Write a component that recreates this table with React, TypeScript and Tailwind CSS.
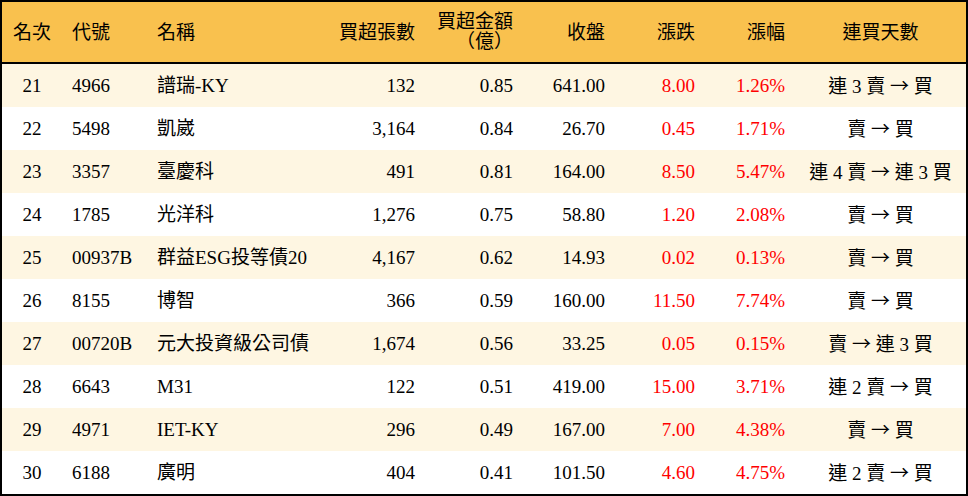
const rows = [
  { rank: 21, code: '4966', name: '譜瑞-KY', vol: '132', amt: '0.85', close: '641.00', chg: '8.00', pct: '1.26%', from: '連 3 賣', to: '買' },
  { rank: 22, code: '5498', name: '凱崴', vol: '3,164', amt: '0.84', close: '26.70', chg: '0.45', pct: '1.71%', from: '賣', to: '買' },
  { rank: 23, code: '3357', name: '臺慶科', vol: '491', amt: '0.81', close: '164.00', chg: '8.50', pct: '5.47%', from: '連 4 賣', to: '連 3 買' },
  { rank: 24, code: '1785', name: '光洋科', vol: '1,276', amt: '0.75', close: '58.80', chg: '1.20', pct: '2.08%', from: '賣', to: '買' },
  { rank: 25, code: '00937B', name: '群益ESG投等債20', vol: '4,167', amt: '0.62', close: '14.93', chg: '0.02', pct: '0.13%', from: '賣', to: '買' },
  { rank: 26, code: '8155', name: '博智', vol: '366', amt: '0.59', close: '160.00', chg: '11.50', pct: '7.74%', from: '賣', to: '買' },
  { rank: 27, code: '00720B', name: '元大投資級公司債', vol: '1,674', amt: '0.56', close: '33.25', chg: '0.05', pct: '0.15%', from: '賣', to: '連 3 買' },
  { rank: 28, code: '6643', name: 'M31', vol: '122', amt: '0.51', close: '419.00', chg: '15.00', pct: '3.71%', from: '連 2 賣', to: '買' },
  { rank: 29, code: '4971', name: 'IET-KY', vol: '296', amt: '0.49', close: '167.00', chg: '7.00', pct: '4.38%', from: '賣', to: '買' },
  { rank: 30, code: '6188', name: '廣明', vol: '404', amt: '0.41', close: '101.50', chg: '4.60', pct: '4.75%', from: '連 2 賣', to: '買' },
];

const cols = 'grid grid-cols-[60px_85px_178px_100px_98px_92px_90px_90px_171px] items-center';

export default function App() {
  return (
    <div className="w-[968px] h-[496px] bg-white">
      <div
        className="border-2 border-black text-[19px] text-black leading-[23px] [text-spacing-trim:space-all]"
        style={{ fontFamily: '"Liberation Serif", "Noto Sans CJK TC", serif' }}
      >
        <div className={`${cols} h-[62px] bg-[#f9c14e] border-b-2 border-black`}>
          <div className="text-center">名次</div>
          <div className="pl-[10px]">代號</div>
          <div className="pl-[10px]">名稱</div>
          <div className="text-right pr-[10px]">買超張數</div>
          <div className="text-right pr-[10px] leading-[20px]">
            買超金額
            <br />
            （億）
          </div>
          <div className="text-right pr-[10px]">收盤</div>
          <div className="text-right pr-[10px]">漲跌</div>
          <div className="text-right pr-[10px]">漲幅</div>
          <div className="text-center">連買天數</div>
        </div>
        {rows.map((r, i) => (
          <div key={r.rank} className={`${cols} h-[43px] ${i % 2 === 0 ? 'bg-[#fef6e2]' : 'bg-white'}`}>
            <div className="text-center">{r.rank}</div>
            <div className="pl-[10px]">{r.code}</div>
            <div className="pl-[10px] whitespace-nowrap">{r.name}</div>
            <div className="text-right pr-[10px]">{r.vol}</div>
            <div className="text-right pr-[10px]">{r.amt}</div>
            <div className="text-right pr-[10px]">{r.close}</div>
            <div className="text-right pr-[10px] text-[#ff0000]">{r.chg}</div>
            <div className="text-right pr-[10px] text-[#ff0000]">{r.pct}</div>
            <div className="text-center whitespace-nowrap">
              {r.from}{' '}
              <span style={{ fontFamily: '"Noto Sans CJK TC", sans-serif' }}>→</span>{' '}
              {r.to}
            </div>
          </div>
        ))}
      </div>
    </div>
  );
}
